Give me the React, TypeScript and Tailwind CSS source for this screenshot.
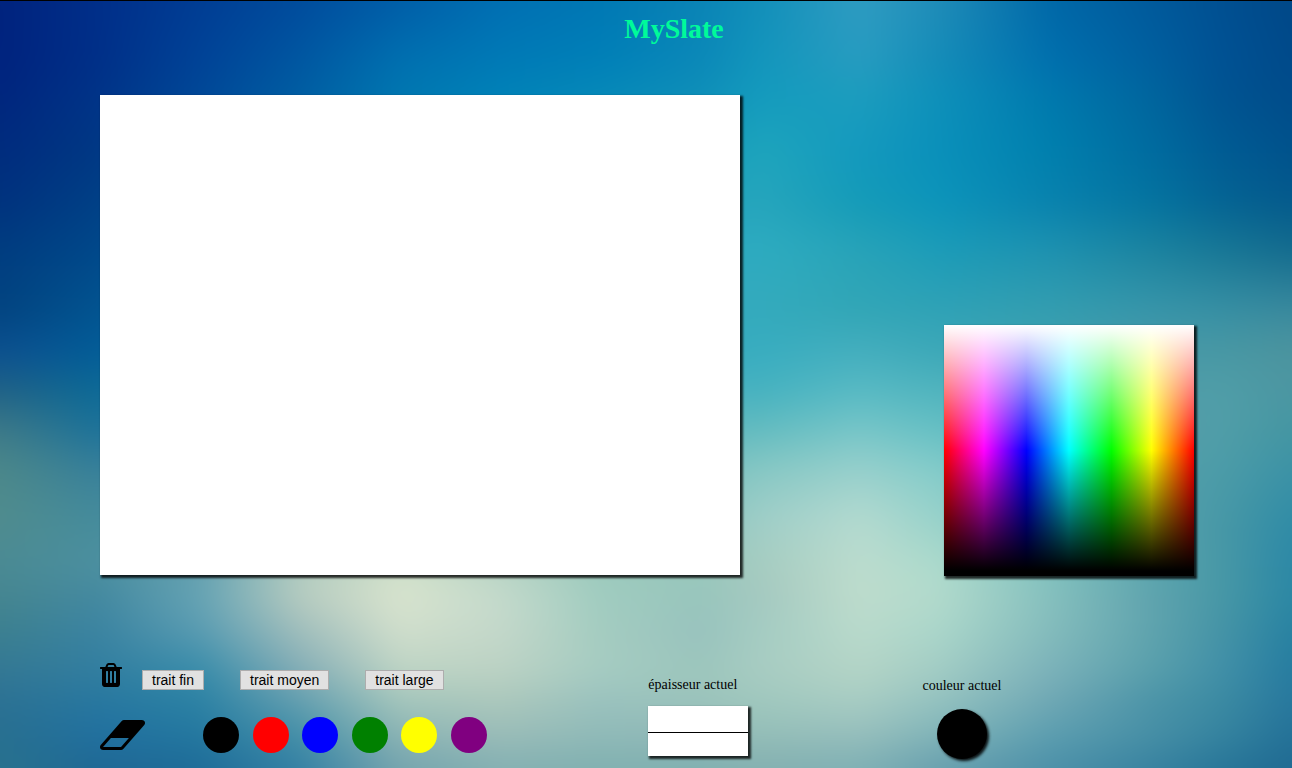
import React, { useState } from "react";

const STOPS = [0, 100, 200, 300, 400, 500, 600, 700, 760, 860, 940, 1050, 1150, 1220, 1292];

const ROWS: { y: number; colors: string }[] = [
  { y: 0, colors: "00237e 002f8a 003d94 004c9d 005ea8 006fb3 0078b4 0a84b6 128fba 2f9cc2 1f8cb8 0068a8 005a9c 005092 004888" },
  { y: 60, colors: "00237e 003088 004397 0057a1 0070b0 007ab6 0080b8 0b88b8 1396bc 279cc0 148cb8 0070ae 00609f 005294 004a8a" },
  { y: 95, colors: "00267e 003488 004897 005ea2 0077b0 0082b8 0689b8 0f8fb8 149bbe 1c9dbe 0e90ba 0079ae 00669e 005492 004c8a" },
  { y: 150, colors: "002c7e 003884 00509a 0066a6 007cb0 0088b8 0c90b8 149abc 1ea5bc 1499be 0a90ba 0080ae 006ca0 005c94 00528c" },
  { y: 200, colors: "00327e 004086 00589a 0070a8 0484b0 0c90b8 149ab8 20a2bc 26a5bc 149bb8 0c94ba 0882ae 0474a0 046494 045a8c" },
  { y: 250, colors: "003d80 00488a 0860a0 1078a8 188cb0 2098b8 28a0bc 2ca8c0 2eacc0 28a3b8 1c9cb8 1e92b0 1c84a0 187896 146c8e" },
  { y: 310, colors: "024480 025490 1068a0 1c80a8 2890b0 309cb8 34a4bc 36aabe 34aabc 32a6b6 30a2b6 349eb0 3896aa 3890a4 3a8a9e" },
  { y: 350, colors: "0c5090 025c98 1870a0 2c88ac 3898b4 3ca2b8 3ca8bc 38aabe 38adc0 44aebe 3ca8b8 3ea0b0 4898a8 4898a4 4c949e" },
  { y: 390, colors: "206286 0c6a96 2c7ca0 4490ac 4c9cb4 50a8b8 50b0bc 48b0be 46b2c0 58bac4 50b4be 50a8b4 509ca8 509ea8 4c96a2" },
  { y: 430, colors: "3e7a88 1c729a 4084a0 5898ac 68a8b4 68b4b8 64b8bc 60b8bc 64bcc0 78c6c8 66c0c4 5cacb4 549eaa 519ea8 4496a2" },
  { y: 470, colors: "4c888a 38809a 488ca4 70a4b0 84b4b8 80bcbc 78bcbc 78c0c0 88c8c4 98d0cc 84ccca 64b0b4 549eaa 4c9ca8 3c92a6" },
  { y: 520, colors: "508c8e 458c9c 5c98a8 90b4b8 a8c8c0 98c4bc 8cc0bc 8cc4bc a0cec8 b4dad0 98d2ca 74b8b8 58a2ae 4898a6 308ca6" },
  { y: 565, colors: "4a8a94 4c90a0 64a0b0 b0ccc0 cfe0ca b8d4c4 9ccabc 98c6bc a6ccc0 bcdcce acdacc 80c2be 5ca6ae 4898a6 2c88a6" },
  { y: 595, colors: "468690 4489a0 66a4b4 b8ccc0 d9e4ce c4dacc a0ccc0 98c6bc a4c8c0 bedccc b2dacc 86c0be 60a4ae 4898a6 2c88a4" },
  { y: 630, colors: "3c8090 3b84a2 5a9cb2 a0bebc d0decc c4d8ca a4ccc0 98c2be a4ccc2 b9dacc aad6ca 84bcbc 60a4ae 4694a6 2882a2" },
  { y: 670, colors: "347894 327ea0 388caa 84adb6 bed4c4 bcd2c4 a6ccc2 9cc6bc a8ccc2 b4d4c6 a2ccc4 7cb2ba 5aa0ac 4290a8 267ca0" },
  { y: 700, colors: "2c7294 2878a0 2c82a4 649fb0 a4c6bc acc8bc 9ac2be 9cc4bc a0c8be a8cdc4 94c2c0 70a8b4 4c94a8 3c8ba2 28789e" },
  { y: 735, colors: "286f90 2170a0 2478a0 4490a8 8cb4b4 9abcb8 90bab8 90b8b8 94beb8 96bebc 80b4b8 5c9eb0 4890a6 3684a0 247298" },
  { y: 768, colors: "28728e 1f6894 1e6c98 3480a4 74a4ae 84b0b2 80b0b0 80b0b0 84b0b0 7eb0b4 689fae 4c90a8 3882a0 287698 206a92" },
];

function Backdrop() {
  return (
    <svg
      aria-hidden="true"
      className="absolute inset-0 -z-10 h-full w-full overflow-hidden"
      viewBox="0 0 1292 768"
      preserveAspectRatio="none"
    >
      <defs>
        <filter
          id="soften"
          filterUnits="userSpaceOnUse"
          x="-60"
          y="-60"
          width="1412"
          height="888"
          colorInterpolationFilters="sRGB"
        >
          <feGaussianBlur stdDeviation="14" />
        </filter>
        <linearGradient id="fade" x1="0" y1="0" x2="0" y2="1">
          <stop offset="0" stopColor="black" />
          <stop offset="1" stopColor="white" />
        </linearGradient>
        {ROWS.map((row, i) => (
          <linearGradient key={row.y} id={`band${i}`} gradientUnits="userSpaceOnUse" x1="0" y1="0" x2="1292" y2="0">
            {row.colors.split(" ").map((c, j) => (
              <stop key={STOPS[j]} offset={STOPS[j] / 1292} stopColor={`#${c}`} />
            ))}
          </linearGradient>
        ))}
        {ROWS.slice(1).map((row, i) => (
          <mask key={row.y} id={`mask${i + 1}`} maskUnits="userSpaceOnUse" x="-60" y="-60" width="1412" height="888">
            <rect x="-60" y={ROWS[i].y} width="1412" height={row.y - ROWS[i].y} fill="url(#fade)" />
            <rect x="-60" y={row.y} width="1412" height={828 - row.y} fill="white" />
          </mask>
        ))}
      </defs>
      <g filter="url(#soften)">
        {ROWS.map((row, i) => (
          <rect
            key={row.y}
            x="-60"
            y="-60"
            width="1412"
            height="888"
            fill={`url(#band${i})`}
            mask={i > 0 ? `url(#mask${i})` : undefined}
          />
        ))}
      </g>
    </svg>
  );
}

function TrashIcon() {
  return (
    <svg aria-hidden="true" className="h-6 w-[22px]" viewBox="192 128 1408 1536" fill="currentColor">
      <path d="M704 1376v-704q0-14-9-23t-23-9h-64q-14 0-23 9t-9 23v704q0 14 9 23t23 9h64q14 0 23-9t9-23zm256 0v-704q0-14-9-23t-23-9h-64q-14 0-23 9t-9 23v704q0 14 9 23t23 9h64q14 0 23-9t9-23zm256 0v-704q0-14-9-23t-23-9h-64q-14 0-23 9t-9 23v704q0 14 9 23t23 9h64q14 0 23-9t9-23zm-544-992h448l-48-117q-7-9-17-11h-317q-10 2-17 11zm928 32v64q0 14-9 23t-23 9h-96v948q0 83-47 143.500t-113 60.500h-832q-66 0-113-58.500t-47-141.500v-952h-96q-14 0-23-9t-9-23v-64q0-14 9-23t23-9h309l70-167q15-37 54-63t79-26h320q40 0 79 26t54 63l70 167h309q14 0 23 9t9 23z" />
    </svg>
  );
}

function EraserIcon() {
  return (
    <svg aria-hidden="true" className="h-[30px] w-[45px]" viewBox="0 0 1920 1280" fill="currentColor">
      <path d="M896 1152l336-384h-768l-336 384h768zm1013-1077q15 34 9.500 71.500t-30.500 65.500l-896 1024q-38 44-96 44h-768q-38 0-69.500-20.500t-47.500-54.500q-15-34-9.500-71.500t30.500-65.500l896-1024q38-44 96-44h768q38 0 69.500 20.500t47.500 54.500z" />
    </svg>
  );
}

const WIDTHS = [
  { label: "trait fin", size: 1 },
  { label: "trait moyen", size: 5 },
  { label: "trait large", size: 10 },
];

const SWATCHES = [
  { name: "noir", value: "#000000", style: "bg-black" },
  { name: "rouge", value: "#ff0000", style: "bg-[#ff0000]" },
  { name: "bleu", value: "#0000ff", style: "bg-[#0000ff]" },
  { name: "vert", value: "#008000", style: "bg-[#008000]" },
  { name: "jaune", value: "#ffff00", style: "bg-[#ffff00]" },
  { name: "violet", value: "#800080", style: "bg-[#800080]" },
];

export default function App() {
  const [color, setColor] = useState("#000000");
  const [size, setSize] = useState(1);

  return (
    <div className="relative isolate min-h-screen border-t border-black pb-2 font-['Liberation_Serif',serif] text-black">
      <Backdrop />

      <header className="pt-3 pr-11 pl-[100px]">
        <h1 className="text-center text-[28px] leading-8 font-bold text-[#00fa9a]">MySlate</h1>
      </header>

      <main>
        <section className="mt-[50px] flex items-end justify-between gap-8 pr-[98px] pl-[100px]">
          <canvas
            width={640}
            height={480}
            aria-label="ardoise"
            className="mb-px cursor-crosshair bg-white shadow-[2px_2px_2px_1px_rgba(0,0,0,0.8)]"
          />
          <div className="h-[251px] w-[250px] shrink-0 cursor-crosshair bg-[linear-gradient(to_bottom,#fff_0%,rgba(255,255,255,0)_50%,rgba(0,0,0,0)_50%,#000_98%),linear-gradient(to_right,#f00_0%,#f0f_16%,#00f_33%,#0ff_50%,#0f0_67%,#ff0_83%,#f00_100%)] shadow-[2px_2px_2px_1px_rgba(0,0,0,0.8)]" />
        </section>

        <section className="mt-[86px] grid grid-cols-[46fr_23fr_31fr] pl-[100px]">
          <div>
            <div className="flex items-start">
              <button type="button" aria-label="effacer tout" className="mt-px cursor-pointer">
                <TrashIcon />
              </button>
              <div className="mt-2 ml-5 flex gap-9">
                {WIDTHS.map((w) => (
                  <button
                    key={w.label}
                    type="button"
                    onClick={() => setSize(w.size)}
                    className="h-5 border border-[#adadad] bg-[#e1e1e1] px-[9px] font-['Liberation_Sans',sans-serif] text-sm leading-[18px] whitespace-nowrap"
                  >
                    {w.label}
                  </button>
                ))}
              </div>
            </div>

            <div className="mt-[27px] flex items-center gap-[58px]">
              <button type="button" aria-label="gomme" onClick={() => setColor("#ffffff")} className="cursor-pointer">
                <EraserIcon />
              </button>
              <div className="flex w-[284px] justify-between">
                {SWATCHES.map((s) => (
                  <button
                    key={s.name}
                    type="button"
                    aria-label={s.name}
                    onClick={() => setColor(s.value)}
                    className={`size-9 cursor-pointer rounded-full ${s.style}`}
                  />
                ))}
              </div>
            </div>
          </div>

          <div className="pt-[15px]">
            <p className="text-sm leading-4">épaisseur actuel</p>
            <div className="mt-[13px] flex h-[50px] w-[100px] items-center bg-white pt-[3px] shadow-[2px_2px_2px_1px_rgba(0,0,0,0.8)]">
              <div className="w-full bg-black" style={{ height: size }} />
            </div>
          </div>

          <div className="pt-4">
            <p className="text-sm leading-4">couleur actuel</p>
            <div
              className="mt-[15px] ml-[15px] size-[50px] rounded-full shadow-[2px_2px_3px_rgba(0,0,0,0.9)]"
              style={{ backgroundColor: color }}
            />
          </div>
        </section>
      </main>
    </div>
  );
}
